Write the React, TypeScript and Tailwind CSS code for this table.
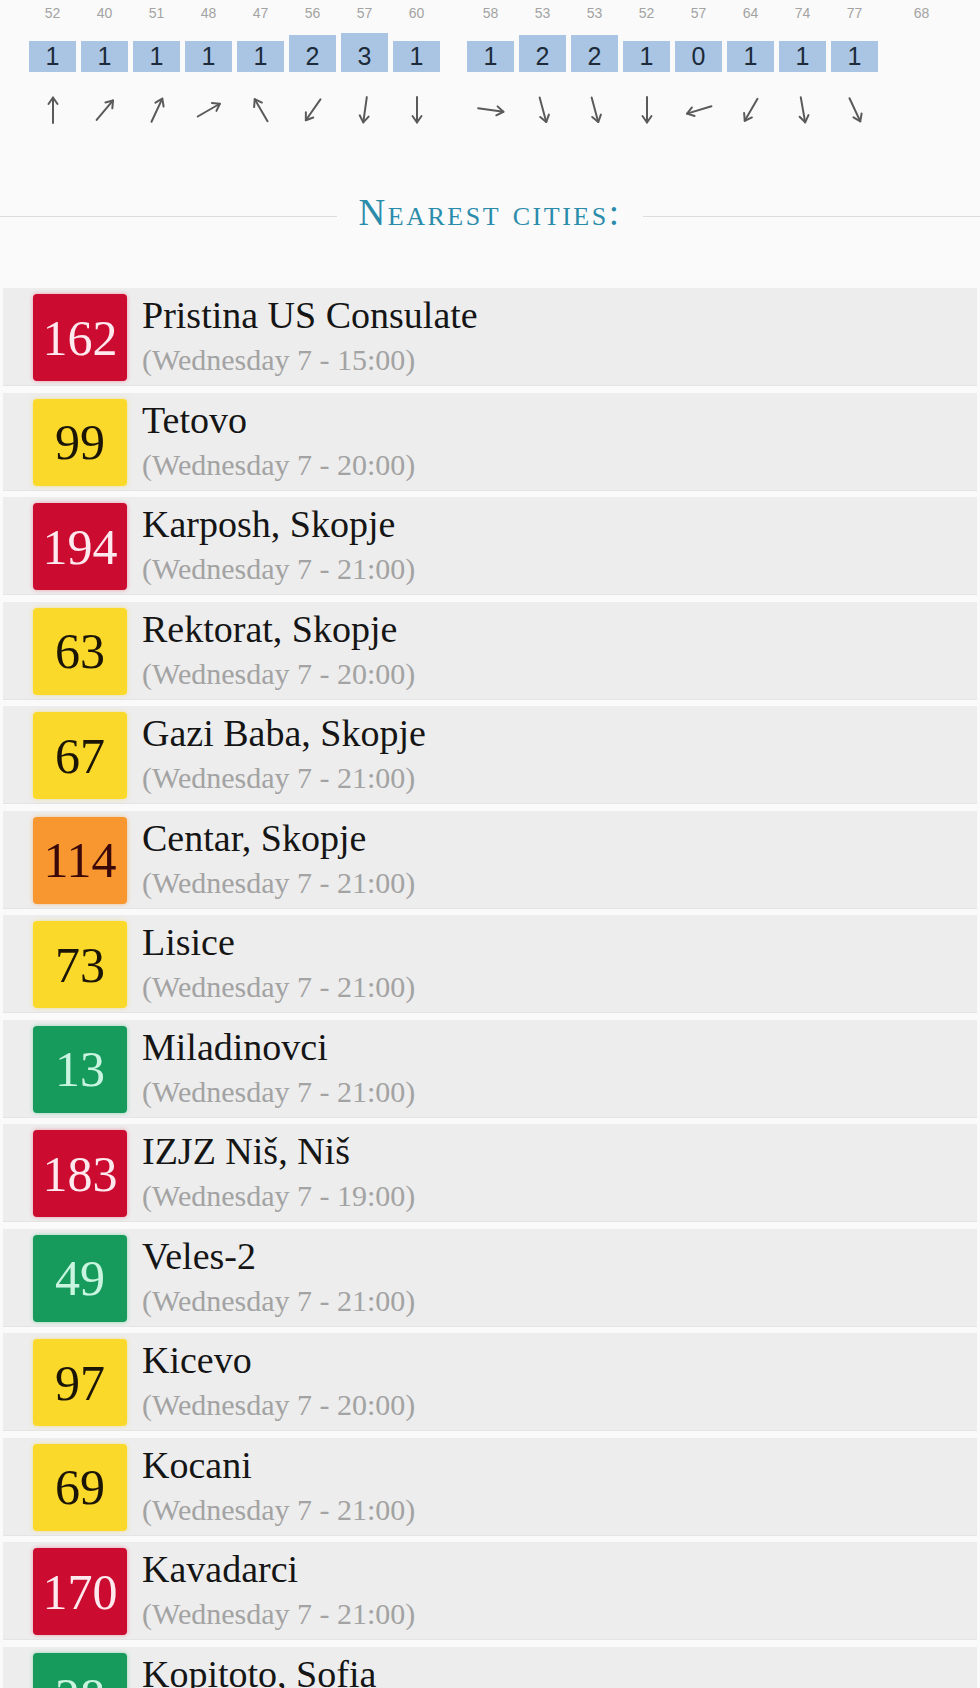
import React from 'react';

type Level = 'red' | 'yellow' | 'orange' | 'green';

interface Column {
  label: string;
  value?: number;
  angle?: number;
}

const groupA: Column[] = [
  { label: '52', value: 1, angle: 0 },
  { label: '40', value: 1, angle: 40 },
  { label: '51', value: 1, angle: 25 },
  { label: '48', value: 1, angle: 60 },
  { label: '47', value: 1, angle: -30 },
  { label: '56', value: 2, angle: 215 },
  { label: '57', value: 3, angle: 188 },
  { label: '60', value: 1, angle: 180 },
];

const groupB: Column[] = [
  { label: '58', value: 1, angle: 98 },
  { label: '53', value: 2, angle: 165 },
  { label: '53', value: 2, angle: 165 },
  { label: '52', value: 1, angle: 180 },
  { label: '57', value: 0, angle: 253 },
  { label: '64', value: 1, angle: 210 },
  { label: '74', value: 1, angle: 170 },
  { label: '77', value: 1, angle: 155 },
];

const cities: { aqi: number; level: Level; name: string; time: string }[] = [
  { aqi: 162, level: 'red', name: 'Pristina US Consulate', time: '15:00' },
  { aqi: 99, level: 'yellow', name: 'Tetovo', time: '20:00' },
  { aqi: 194, level: 'red', name: 'Karposh, Skopje', time: '21:00' },
  { aqi: 63, level: 'yellow', name: 'Rektorat, Skopje', time: '20:00' },
  { aqi: 67, level: 'yellow', name: 'Gazi Baba, Skopje', time: '21:00' },
  { aqi: 114, level: 'orange', name: 'Centar, Skopje', time: '21:00' },
  { aqi: 73, level: 'yellow', name: 'Lisice', time: '21:00' },
  { aqi: 13, level: 'green', name: 'Miladinovci', time: '21:00' },
  { aqi: 183, level: 'red', name: 'IZJZ Niš, Niš', time: '19:00' },
  { aqi: 49, level: 'green', name: 'Veles-2', time: '21:00' },
  { aqi: 97, level: 'yellow', name: 'Kicevo', time: '20:00' },
  { aqi: 69, level: 'yellow', name: 'Kocani', time: '21:00' },
  { aqi: 170, level: 'red', name: 'Kavadarci', time: '21:00' },
  { aqi: 28, level: 'green', name: 'Kopitoto, Sofia', time: '21:00' },
];

const badgeClass: Record<Level, string> = {
  red: 'bg-[#cc0b31] text-[#fde9ee] shadow-[0_0_4px_rgba(230,60,90,0.45)]',
  yellow: 'bg-[#fbd92b] text-[#1b1506] shadow-[0_0_4px_rgba(250,215,60,0.5)]',
  orange: 'bg-[#f8962f] text-[#3a0808] shadow-[0_0_4px_rgba(245,150,50,0.5)]',
  green: 'bg-[#169b5d] text-[#c9f5e0] shadow-[0_0_4px_rgba(40,190,120,0.45)]',
};

// bar heights by forecast value
const barClass = (v?: number) => {
  if (v === undefined) return 'h-[30px] bg-transparent';
  if (v >= 3) return 'h-[39px] bg-[#a9c5e3]';
  if (v === 2) return 'h-[37px] bg-[#a9c5e3]';
  return 'h-[31px] bg-[#a9c5e3]';
};

function Arrow({ angle }: { angle: number }) {
  return (
    <svg width="32" height="32" viewBox="0 0 32 32" style={{ transform: `rotate(${angle}deg)` }}>
      <g stroke="#5a5a5a" strokeWidth="2" fill="none" strokeLinecap="round" strokeLinejoin="round">
        <line x1="16" y1="29" x2="16" y2="3.5" />
        <polyline points="11.5,10 16,3.5 20.5,10" />
      </g>
    </svg>
  );
}

function ForecastColumn({ col }: { col: Column }) {
  return (
    <div className="flex w-[47px] flex-col items-center">
      <div className="h-[26px] pt-[6px] text-[14px] leading-none text-[#a3a3a3]">{col.label}</div>
      <div className="flex h-[46px] w-full items-end">
        <div className={`flex w-full items-end justify-center pb-[3px] ${barClass(col.value)}`}>
          {col.value !== undefined && (
            <span className="text-[25px] leading-none text-[#1c2a3a]">{col.value}</span>
          )}
        </div>
      </div>
      <div className="mt-[22px] h-[32px]">{col.angle !== undefined && <Arrow angle={col.angle} />}</div>
    </div>
  );
}

export default function App() {
  return (
    <div className="h-[1688px] overflow-hidden bg-[#fafafa] font-['Liberation_Serif',serif]">
      {/* forecast strip */}
      <div className="flex pl-[29px] font-['Liberation_Sans',Arial,sans-serif]">
        <div className="flex gap-[5px]">
          {groupA.map((c, i) => (
            <ForecastColumn key={`a-${i}`} col={c} />
          ))}
        </div>
        <div className="ml-[27px] flex gap-[5px]">
          {groupB.map((c, i) => (
            <ForecastColumn key={`b-${i}`} col={c} />
          ))}
        </div>
        <div className="ml-[20px]">
          <ForecastColumn col={{ label: '68' }} />
        </div>
      </div>

      {/* heading */}
      <div className="mt-[70px] flex items-start">
        <div className="mt-[20px] h-px flex-1 bg-[#dcdcdc]" />
        <h2 className="px-[22px] text-[37px] leading-[34px] tracking-[2.5px] text-[#2a8cab] [font-variant:small-caps]">
          Nearest cities:
        </h2>
        <div className="mt-[20px] h-px flex-1 bg-[#dcdcdc]" />
      </div>

      {/* city list */}
      <div className="mt-[58px] flex flex-col gap-[6.5px] px-[3px]">
        {cities.map((c) => (
          <div
            key={c.name}
            className="flex h-[98px] shrink-0 items-start border-b border-[#e4e4e4] bg-[#ededed]"
          >
            <div
              className={`ml-[30px] mt-[6px] flex h-[87px] w-[94px] shrink-0 items-center justify-center rounded-[4px] text-[50px] leading-none ${badgeClass[c.level]}`}
            >
              {c.aqi}
            </div>
            <div className="ml-[15px] pt-[8px]">
              <div className="text-[38px] leading-[38px] text-[#151515]">{c.name}</div>
              <div className="mt-[11px] text-[30px] leading-[30px] text-[#a3a3a3]">
                (Wednesday 7 - {c.time})
              </div>
            </div>
          </div>
        ))}
      </div>
    </div>
  );
}
